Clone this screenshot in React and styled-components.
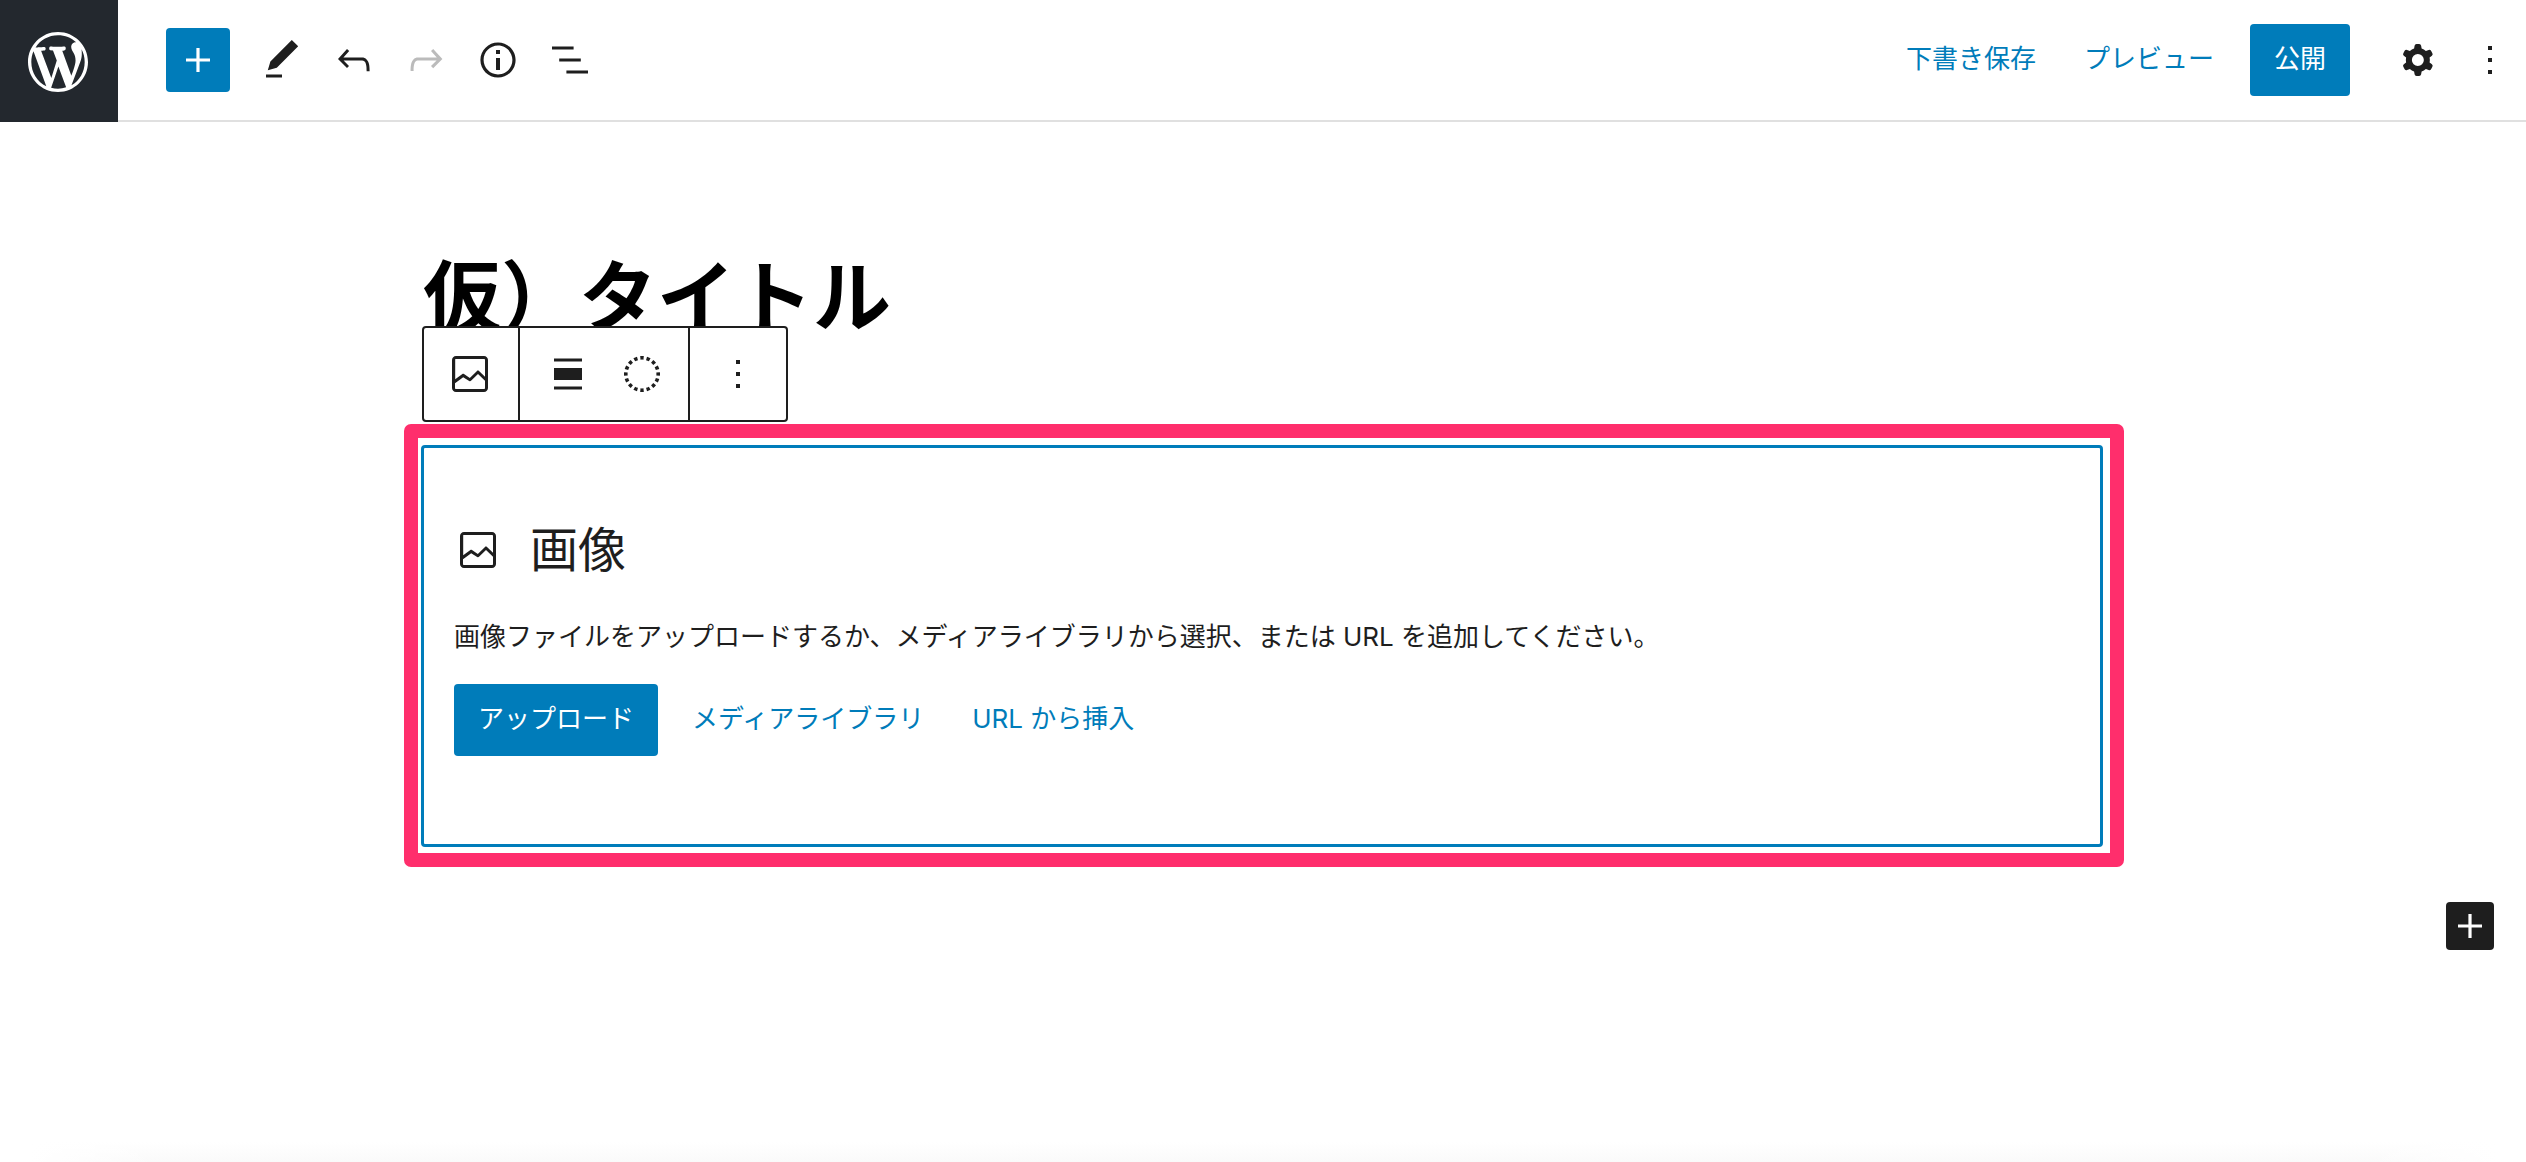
import React from 'react';
import styled, { createGlobalStyle } from 'styled-components';

const GlobalStyle = createGlobalStyle`
  *, *::before, *::after {
    box-sizing: border-box;
  }

  body {
    margin: 0;
    background-color: #fff;
    color: #1e1e1e;
    font-family: Inter, 'Noto Sans CJK JP', sans-serif;
    font-size: 26px;
    line-height: 36px;
  }

  button {
    font: inherit;
    cursor: pointer;
  }
`;

const Page = styled.div`
  display: flex;
  flex-direction: column;
  min-height: 100vh;
`;

const Header = styled.header`
  display: flex;
  height: 122px;
`;

const SiteLink = styled.a`
  display: flex;
  align-items: center;
  width: 118px;
  padding: 2px 0 0 22px;
  background-color: #23282e;
  color: #fff;
`;

const HeaderBar = styled.div`
  display: flex;
  flex: 1;
  align-items: center;
  justify-content: space-between;
  padding: 0 4px 0 48px;
  border-bottom: 2px solid #e0e0e0;
`;

const Tools = styled.div`
  display: flex;
  align-items: center;
  gap: 8px;
`;

const Settings = styled.div`
  display: flex;
  align-items: center;
`;

const Icon = styled.svg`
  display: block;
  flex: none;
  width: ${({ $size }) => $size || 48}px;
  height: ${({ $size }) => $size || 48}px;
  fill: currentColor;
`;

const IconButton = styled.button`
  display: flex;
  align-items: center;
  justify-content: center;
  width: 64px;
  height: 64px;
  padding: 0;
  border: none;
  border-radius: 4px;
  background: none;
  color: #1e1e1e;

  &:disabled {
    color: #bbb;
    cursor: default;
  }
`;

const InserterButton = styled(IconButton)`
  margin-right: 12px;
  background-color: #007cba;
  color: #fff;
`;

const Button = styled.button`
  height: 72px;
  padding: 0 24px 2px;
  border: none;
  border-radius: 4px;
  background-color: ${({ $primary }) => ($primary ? '#007cba' : 'transparent')};
  color: ${({ $primary }) => ($primary ? '#fff' : '#007cba')};
  white-space: nowrap;
`;

const PublishButton = styled(Button)`
  margin: 0 36px 0 12px;
`;

const MenuButtons = styled.div`
  display: flex;
  gap: 8px;
`;

const Canvas = styled.main`
  display: flex;
  flex: 1;
  flex-direction: column;
  padding: 128px 32px 0 30px;
`;

const Column = styled.div`
  width: 100%;
  max-width: 1682px;
  margin: 0 auto;
`;

const Title = styled.h1`
  margin: 0 0 99px;
  padding: 0 2px;
  color: #000;
  font-size: 78px;
  font-weight: 700;
  line-height: 96px;
`;

const Block = styled.section`
  position: relative;
  padding: 78px 30px 88px;
  border: 3px solid #007cba;
  border-radius: 4px;

  /* highlight drawn around the selected block */
  &::after {
    content: '';
    position: absolute;
    inset: -24px -24px -23px -20px;
    border: 14px solid #ff2e6c;
    border-radius: 7px;
    pointer-events: none;
  }
`;

const BlockToolbar = styled.div`
  position: absolute;
  left: -2px;
  bottom: 422px;
  display: flex;
  height: 96px;
  border: 2px solid #1e1e1e;
  border-radius: 4px;
  background-color: #fff;
`;

const ToolbarGroup = styled.div`
  display: flex;
  align-items: center;
  gap: 26px;
  padding: 0 24px 0 22px;

  & + & {
    padding: 0 22px 0 24px;
    border-left: 2px solid #1e1e1e;
  }

  &:last-child {
    padding: 0 24px;
  }
`;

const ToolbarButton = styled(IconButton)`
  width: 48px;
`;

const BlockLabel = styled.h2`
  display: flex;
  align-items: center;
  gap: 28px;
  height: 48px;
  margin: 0 0 45px;
  font-size: 48px;
  font-weight: 400;
  line-height: 48px;
`;

const Instructions = styled.p`
  margin: 0 0 29px;
`;

const Actions = styled.div`
  display: flex;

  & > :first-child {
    margin-right: 10px;
  }
`;

const AppendButton = styled(IconButton)`
  align-self: flex-end;
  width: 48px;
  height: 48px;
  margin-top: 55px;
  background-color: #1e1e1e;
  color: #fff;
`;

const BottomFade = styled.div`
  height: 20px;
  background:
    linear-gradient(90deg, #fff 30px, transparent 160px, transparent calc(100% - 160px), #fff calc(100% - 30px)),
    linear-gradient(#fff, #fafafa);
`;

const paths = {
  plus: 'M18 11.2h-5.2V6h-1.6v5.2H6v1.6h5.2V18h1.6v-5.2H18z',
  edit: 'M20.1 5.1L16.9 2 6.2 12.7l-1.3 4.4 4.5-1.2L20.1 5.1zM4 20.8h8v-1.5H4v1.5z',
  undo: 'M18.3 11.7c-.6-.6-1.4-.9-2.3-.9H6.7l2.9-3.3-1.1-1-4.5 5L8.5 16l1-1-2.7-2.7H16c.5 0 .9.2 1.3.5 1 1 1 3.4 1 4.5v.3h1.5v-.2c0-1.5 0-4.3-1.5-5.7z',
  redo: 'M15.6 6.5l-1.1 1 2.9 3.3H8c-.9 0-1.7.3-2.3.9-1.4 1.5-1.4 4.2-1.4 5.6v.2h1.5v-.3c0-1.1 0-3.5 1-4.5.3-.3.7-.5 1.3-.5h9.2L14.5 15l1.1 1.1 4.6-4.6-4.6-5z',
  info: 'M12 3.2c-4.8 0-8.8 3.9-8.8 8.8 0 4.8 3.9 8.8 8.8 8.8 4.8 0 8.8-3.9 8.8-8.8 0-4.8-4-8.8-8.8-8.8zm0 16c-4 0-7.2-3.3-7.2-7.2C4.8 8 8 4.8 12 4.8s7.2 3.3 7.2 7.2c0 4-3.2 7.2-7.2 7.2zM11 17h2v-6h-2v6zm0-8h2V7h-2v2z',
  outline: 'M13.8 5.2H3v1.5h10.8V5.2zm-3.6 12v1.5H21v-1.5H10.2zm7.2-6H6.6v1.5h10.8v-1.5z',
  cog: 'M10.289 4.836A1 1 0 0111.275 4h1.306a1 1 0 01.987.836l.244 1.466c.787.26 1.503.679 2.108 1.218l1.393-.522a1 1 0 011.216.437l.653 1.13a1 1 0 01-.23 1.273l-1.148.944a6.025 6.025 0 010 2.435l1.149.946a1 1 0 01.23 1.272l-.653 1.13a1 1 0 01-1.216.437l-1.394-.522c-.605.54-1.32.958-2.108 1.218l-.244 1.466a1 1 0 01-.987.836h-1.306a1 1 0 01-.986-.836l-.244-1.466a5.995 5.995 0 01-2.108-1.218l-1.394.522a1 1 0 01-1.217-.436l-.653-1.131a1 1 0 01.23-1.272l1.149-.946a6.026 6.026 0 010-2.435l-1.148-.944a1 1 0 01-.23-1.272l.653-1.131a1 1 0 011.217-.437l1.393.522a5.994 5.994 0 012.108-1.218l.244-1.466zM14.929 12a3 3 0 11-6 0 3 3 0 016 0z',
  more: 'M13 19h-2v-2h2v2zm0-6h-2v-2h2v2zm0-6h-2V5h2v2z',
  image: 'M19 3H5c-1.1 0-2 .9-2 2v14c0 1.1.9 2 2 2h14c1.1 0 2-.9 2-2V5c0-1.1-.9-2-2-2zM5 4.5h14c.3 0 .5.2.5.5v8.4l-3-2.9c-.3-.3-.8-.3-1 0L11.9 14 9 12c-.3-.2-.6-.2-.8 0l-3.6 2.6V5c-.1-.3.1-.5.4-.5zm14 15H5c-.3 0-.5-.2-.5-.5v-2.4l4.1-3 3 1.9c.3.2.7.2.9-.1L16 12l3.5 3.4V19c0 .3-.2.5-.5.5z',
  align: 'M5 15h14V9H5v6zm0 4.8h14v-1.5H5v1.5zM5 4.2v1.5h14V4.2H5z',
};

function Glyph({ name }) {
  return (
    <Icon viewBox="0 0 24 24" aria-hidden="true">
      <path fillRule="evenodd" d={paths[name]} />
    </Icon>
  );
}

function WordPressLogo() {
  return (
    <Icon $size={72} viewBox="-2 -2 24 24" aria-hidden="true">
      <path d="M20 10c0-5.51-4.49-10-10-10C4.48 0 0 4.49 0 10c0 5.52 4.48 10 10 10 5.51 0 10-4.48 10-10zM7.78 15.37L4.37 6.22c.55-.02 1.17-.08 1.17-.08.5-.06.44-1.13-.06-1.11 0 0-1.45.11-2.37.11-.18 0-.37 0-.58-.01C4.12 2.69 6.87 1.11 10 1.11c2.33 0 4.45.87 6.05 2.34-.68-.11-1.65.39-1.65 1.58 0 .74.45 1.36.9 2.1.35.61.55 1.36.55 2.46 0 1.49-1.4 5-1.4 5l-3.03-8.37c.54-.02.82-.17.82-.17.5-.05.44-1.25-.06-1.22 0 0-1.44.12-2.38.12-.87 0-2.33-.12-2.33-.12-.5-.03-.56 1.2-.06 1.22l.92.08 1.26 3.41zM17.41 10c.24-.64.74-1.87.43-4.25.7 1.29 1.05 2.71 1.05 4.25 0 3.29-1.73 6.24-4.4 7.78.97-2.59 1.94-5.2 2.92-7.78zM6.1 18.09C3.12 16.65 1.11 13.53 1.11 10c0-1.3.23-2.48.72-3.59C3.25 10.3 4.67 14.2 6.1 18.09zm4.03-6.63l2.58 6.98c-.86.29-1.76.45-2.71.45-.79 0-1.57-.11-2.29-.33.81-2.38 1.62-4.74 2.42-7.1z" />
    </Icon>
  );
}

function DottedCircle() {
  return (
    <Icon viewBox="0 0 24 24" aria-hidden="true">
      <circle
        cx="12"
        cy="12"
        r="8.1"
        fill="none"
        stroke="currentColor"
        strokeWidth="1.8"
        pathLength="16"
        strokeDasharray="0.54 0.46"
        strokeDashoffset="0.27"
      />
    </Icon>
  );
}

function EditorHeader() {
  return (
    <Header>
      <SiteLink href="#" aria-label="投稿を表示">
        <WordPressLogo />
      </SiteLink>
      <HeaderBar>
        <Tools>
          <InserterButton aria-label="ブロックを追加"><Glyph name="plus" /></InserterButton>
          <IconButton aria-label="ツール"><Glyph name="edit" /></IconButton>
          <IconButton aria-label="元に戻す"><Glyph name="undo" /></IconButton>
          <IconButton aria-label="やり直す" disabled><Glyph name="redo" /></IconButton>
          <IconButton aria-label="詳細"><Glyph name="info" /></IconButton>
          <IconButton aria-label="アウトライン"><Glyph name="outline" /></IconButton>
        </Tools>
        <Settings>
          <Button>下書き保存</Button>
          <Button>プレビュー</Button>
          <PublishButton $primary>公開</PublishButton>
          <MenuButtons>
            <IconButton aria-label="設定"><Glyph name="cog" /></IconButton>
            <IconButton aria-label="オプション"><Glyph name="more" /></IconButton>
          </MenuButtons>
        </Settings>
      </HeaderBar>
    </Header>
  );
}

function ImageBlock() {
  return (
    <Block>
      <BlockToolbar role="toolbar" aria-label="ブロックツール">
        <ToolbarGroup>
          <ToolbarButton aria-label="画像"><Glyph name="image" /></ToolbarButton>
        </ToolbarGroup>
        <ToolbarGroup>
          <ToolbarButton aria-label="配置"><Glyph name="align" /></ToolbarButton>
          <ToolbarButton aria-label="スタイル"><DottedCircle /></ToolbarButton>
        </ToolbarGroup>
        <ToolbarGroup>
          <ToolbarButton aria-label="その他"><Glyph name="more" /></ToolbarButton>
        </ToolbarGroup>
      </BlockToolbar>
      <BlockLabel>
        <Glyph name="image" />
        画像
      </BlockLabel>
      <Instructions>
        画像ファイルをアップロードするか、メディアライブラリから選択、または URL を追加してください。
      </Instructions>
      <Actions>
        <Button $primary>アップロード</Button>
        <Button>メディアライブラリ</Button>
        <Button>URL から挿入</Button>
      </Actions>
    </Block>
  );
}

function App() {
  return (
    <>
      <GlobalStyle />
      <Page>
        <EditorHeader />
        <Canvas>
          <Column>
            <Title>仮）タイトル</Title>
            <ImageBlock />
          </Column>
          <AppendButton aria-label="ブロックを追加"><Glyph name="plus" /></AppendButton>
        </Canvas>
        <BottomFade />
      </Page>
    </>
  );
}

export default App;
